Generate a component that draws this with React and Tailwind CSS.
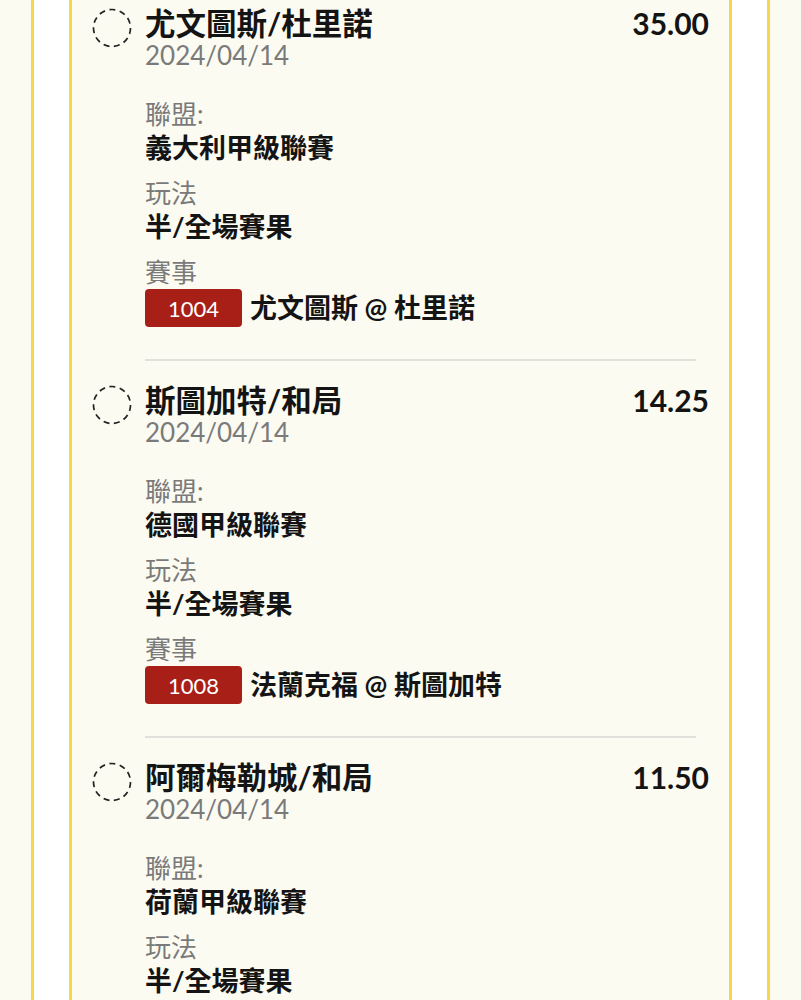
import React from 'react';

const bets = [
  {
    id: 1,
    pick: '尤文圖斯/杜里諾',
    odds: '35.00',
    date: '2024/04/14',
    league: '義大利甲級聯賽',
    market: '半/全場賽果',
    matchNo: '1004',
    match: '尤文圖斯 @ 杜里諾',
  },
  {
    id: 2,
    pick: '斯圖加特/和局',
    odds: '14.25',
    date: '2024/04/14',
    league: '德國甲級聯賽',
    market: '半/全場賽果',
    matchNo: '1008',
    match: '法蘭克福 @ 斯圖加特',
  },
  {
    id: 3,
    pick: '阿爾梅勒城/和局',
    odds: '11.50',
    date: '2024/04/14',
    league: '荷蘭甲級聯賽',
    market: '半/全場賽果',
    matchNo: '1012',
    match: '阿爾梅勒城 @ 威廉二世',
  },
];

const DashedCircle = () => (
  <svg width="40" height="40" viewBox="0 0 40 40" className="shrink-0">
    <circle
      cx="20"
      cy="20"
      r="18.5"
      fill="none"
      stroke="#222"
      strokeWidth="1.7"
      strokeDasharray="6 4.5"
    />
  </svg>
);

const BetItem = ({ bet, first }) => (
  <div className={first ? '' : 'pt-[23px]'}>
    <div className="flex items-start">
      <div className="w-[53px] pt-[1px]">
        <DashedCircle />
      </div>
      <div className="flex-1">
        <div className="flex items-start justify-between">
          <div className="text-[30.5px] leading-[32px] font-bold text-[#141414]">
            {bet.pick}
          </div>
          <div className="text-[30px] leading-[32px] font-bold text-[#141414]">
            {bet.odds}
          </div>
        </div>
        <div className="text-[26px] leading-[32px] text-[#7a7a7a]">{bet.date}</div>

        <div className="mt-[26px] text-[26px] leading-[34px] text-[#7a7a7a]">聯盟:</div>
        <div className="text-[27px] leading-[34px] font-bold text-[#141414]">
          {bet.league}
        </div>

        <div className="mt-[11px] text-[26px] leading-[34px] text-[#7a7a7a]">玩法</div>
        <div className="text-[27px] leading-[34px] font-bold text-[#141414]">
          {bet.market}
        </div>

        <div className="mt-[11px] text-[26px] leading-[34px] text-[#7a7a7a]">賽事</div>
        <div className="flex items-center gap-2">
          <span className="flex h-[38px] w-[97px] items-center justify-center rounded-[4px] bg-[#a81f18] text-[22px] text-white">
            {bet.matchNo}
          </span>
          <span className="text-[27px] leading-[34px] font-bold text-[#141414]">
            {bet.match}
          </span>
        </div>
      </div>
    </div>
    <div className="ml-[53px] mr-[13px] mt-[32px] h-[2px] bg-[#e2e0da]" />
  </div>
);

export default function App() {
  return (
    <div
      className="min-h-screen bg-[#fcfbf2] px-[31px]"
      style={{ fontFamily: 'Lato, "Noto Sans CJK TC", sans-serif' }}
    >
      <div className="min-h-screen border-x-[3px] border-[#f7d74a] bg-white px-[35px]">
        <div className="min-h-screen border-x-[3px] border-[#f7d74a] bg-[#fcfbf2] px-5 pt-[7px]">
          {bets.map((bet, i) => (
            <BetItem key={bet.id} bet={bet} first={i === 0} />
          ))}
        </div>
      </div>
    </div>
  );
}
